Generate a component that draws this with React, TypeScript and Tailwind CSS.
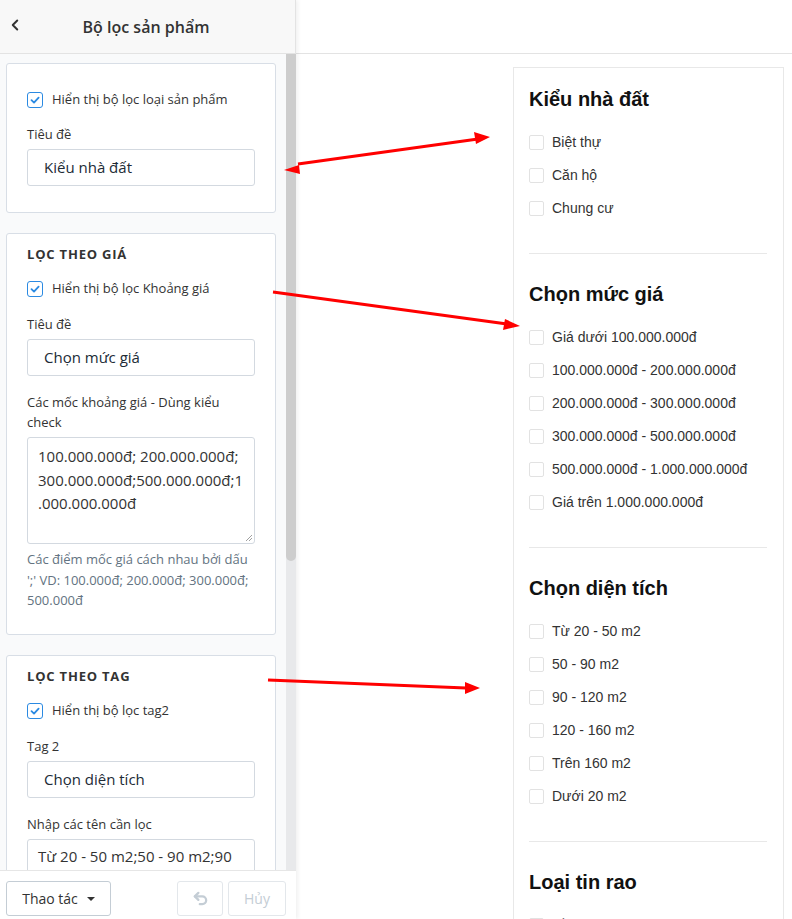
import { ChevronLeft, Undo2 } from 'lucide-react';

const leftFont = { fontFamily: '"Open Sans", "Noto Sans", sans-serif' };
const rightFont = { fontFamily: '"Liberation Sans", Arial, sans-serif' };

const sections = [
  { title: 'Kiểu nhà đất', items: ['Biệt thự', 'Căn hộ', 'Chung cư'] },
  {
    title: 'Chọn mức giá',
    items: [
      'Giá dưới 100.000.000đ',
      '100.000.000đ - 200.000.000đ',
      '200.000.000đ - 300.000.000đ',
      '300.000.000đ - 500.000.000đ',
      '500.000.000đ - 1.000.000.000đ',
      'Giá trên 1.000.000.000đ',
    ],
  },
  {
    title: 'Chọn diện tích',
    items: ['Từ 20 - 50 m2', '50 - 90 m2', '90 - 120 m2', '120 - 160 m2', 'Trên 160 m2', 'Dưới 20 m2'],
  },
  { title: 'Loại tin rao', items: ['Cần bán', 'Cho thuê'] },
];

function BlueCheck({ label }: { label: string }) {
  return (
    <label className="flex items-center h-5 gap-[9px] text-[13px] text-[#333]">
      <span className="w-4 h-4 rounded-[3px] border border-[#2b8ae2] bg-white flex items-center justify-center shrink-0">
        <svg width="10" height="10" viewBox="0 0 10 10" fill="none">
          <path d="M1.5 5.2 4 7.6 8.6 2.6" stroke="#2b8ae2" strokeWidth="1.8" strokeLinecap="round" strokeLinejoin="round" />
        </svg>
      </span>
      {label}
    </label>
  );
}

function Field({ label, value, top = 'mt-[15px]' }: { label: string; value: string; top?: string }) {
  return (
    <div className={top}>
      <p className="h-5 leading-5 text-[13px] text-[#333]">{label}</p>
      <div className="mt-[5px] h-[37px] border border-[#d3d9e0] rounded-[3px] bg-white flex items-center px-4 text-[15px] text-[#212b36]">
        {value}
      </div>
    </div>
  );
}

function Card({ children, className = '' }: { children: React.ReactNode; className?: string }) {
  return (
    <div className={`bg-white border border-[#d8dee6] rounded-[3px] px-5 ${className}`}>{children}</div>
  );
}

function CardTitle({ text }: { text: string }) {
  return <h3 className="h-5 leading-5 text-[13px] font-bold text-[#333] uppercase tracking-[0.8px]">{text}</h3>;
}

export default function App() {
  return (
    <div className="relative w-[792px] h-[919px] overflow-hidden flex bg-white">
      {/* left settings panel */}
      <aside className="w-[296px] h-full flex flex-col bg-[#f9fafb] shadow-[2px_0_4px_rgba(0,0,0,0.06)] z-10" style={leftFont}>
        <div className="h-[54px] shrink-0 bg-[#f8f8f8] border-b border-r border-[#e3e3e3] flex items-center relative">
          <ChevronLeft className="absolute left-[6px] top-[16px] text-[#333]" size={18} strokeWidth={2.6} />
          <h1 className="w-full text-center text-[16px] font-semibold text-[#333] pr-[3px]">Bộ lọc sản phẩm</h1>
        </div>

        <div className="flex-1 flex min-h-0">
          <div className="flex-1 overflow-hidden pt-[9px] pl-[6px] pr-[10px]">
            <Card className="pt-[26px] pb-[26px]">
              <BlueCheck label="Hiển thị bộ lọc loại sản phẩm" />
              <Field label="Tiêu đề" value="Kiểu nhà đất" top="mt-[14px]" />
            </Card>

            <Card className="mt-5 pt-[10px] pb-[23px]">
              <CardTitle text="Lọc theo giá" />
              <div className="mt-[15px]">
                <BlueCheck label="Hiển thị bộ lọc Khoảng giá" />
              </div>
              <Field label="Tiêu đề" value="Chọn mức giá" />
              <div className="mt-[16px]">
                <p className="leading-5 text-[13px] text-[#333]">Các mốc khoảng giá - Dùng kiểu check</p>
                <div className="relative mt-[5px] h-[107px] border border-[#d3d9e0] rounded-[3px] bg-white pl-[10px] pr-1 pt-[7px] text-[15px] leading-[23.5px] text-[#333]">
                  100.000.000đ; 200.000.000đ;
                  <br />
                  300.000.000đ;500.000.000đ;1
                  <br />
                  .000.000.000đ
                  <svg className="absolute right-[1px] bottom-[1px]" width="8" height="8" viewBox="0 0 8 8">
                    <path d="M7 1 1 7M7 4 4 7" stroke="#888" strokeWidth="0.8" />
                  </svg>
                </div>
                <p className="mt-[5px] text-[13px] leading-[20.5px] text-[#637381]">
                  Các điểm mốc giá cách nhau bởi dấu ';' VD: 100.000đ; 200.000đ; 300.000đ; 500.000đ
                </p>
              </div>
            </Card>

            <Card className="mt-5 pt-[10px] pb-6">
              <CardTitle text="Lọc theo tag" />
              <div className="mt-[15px]">
                <BlueCheck label="Hiển thị bộ lọc tag2" />
              </div>
              <Field label="Tag 2" value="Chọn diện tích" />
              <div className="mt-[16px]">
                <p className="h-5 leading-5 text-[13px] text-[#333]">Nhập các tên cần lọc</p>
                <div className="mt-[5px] h-[60px] border border-[#d3d9e0] rounded-[3px] bg-white pl-[10px] pt-[5px] text-[15px] leading-[23.5px] text-[#333]">
                  Từ 20 - 50 m2;50 - 90 m2;90
                </div>
              </div>
            </Card>
          </div>
          <div className="w-[10px] bg-[#e8e9eb] shrink-0">
            <div className="h-[507px] bg-[#cdcdcd] rounded-b-[5px]" />
          </div>
        </div>

        <div className="h-[49px] shrink-0 bg-white border-t border-[#e6e6e6] flex items-start pt-[10px] pl-[6px] pr-[10px] gap-[5px]">
          <button className="h-[35px] w-[105px] border border-[#c4cdd5] rounded-[3px] bg-white flex items-center justify-center gap-[9px] text-[14px] text-[#333]">
            Thao tác
            <span className="w-0 h-0 border-l-[4px] border-r-[4px] border-t-[4px] border-l-transparent border-r-transparent border-t-[#333]" />
          </button>
          <div className="flex-1" />
          <button className="h-[35px] w-[46px] border border-[#e3e7eb] rounded-[3px] bg-white flex items-center justify-center">
            <Undo2 size={17} strokeWidth={3.2} className="text-[#c4cdd5]" />
          </button>
          <button className="h-[35px] w-[58px] border border-[#e3e7eb] rounded-[3px] bg-white text-[14px] text-[#c4cdd5]">
            Hủy
          </button>
        </div>
      </aside>

      {/* preview */}
      <main className="flex-1 flex flex-col" style={rightFont}>
        <div className="h-[54px] shrink-0 bg-white border-b border-[#e3e3e3]" />
        <div className="pl-[217px] pt-[13px]">
          <div className="w-[271px] border border-[#e8e8e8] bg-white pl-[15px] pr-4">
            {sections.map((s, i) => (
              <div key={s.title} className={`${i === 0 ? 'pt-[19px]' : 'pt-[28px] border-t border-[#e8e8e8]'} pb-[28px]`}>
                <h2 className="h-6 leading-6 text-[20px] font-bold text-[#111]">{s.title}</h2>
                <ul className="mt-[15px]">
                  {s.items.map((it) => (
                    <li key={it} className="h-[33px] flex items-center gap-[8px] text-[14px] text-[#333]">
                      <span className="w-[15px] h-[15px] border border-[#e2e2e2] rounded-[2px] bg-white shrink-0" />
                      {it}
                    </li>
                  ))}
                </ul>
              </div>
            ))}
          </div>
        </div>
      </main>

      {/* annotation arrows */}
      <svg className="absolute inset-0 pointer-events-none z-20" width="792" height="919" viewBox="0 0 792 919">
        <g stroke="#ff0000" strokeWidth="3" fill="#ff0000">
          <line x1="298" y1="164" x2="478" y2="139" />
          <polygon points="490,137 474,132 476,144" stroke="none" />
          <polygon points="284,170 299,165 300,174" stroke="none" />
          <line x1="273" y1="292" x2="507" y2="324" />
          <polygon points="520,326 505,319 503,330" stroke="none" />
          <line x1="268" y1="680" x2="466" y2="688" />
          <polygon points="480,688 465,682 465,694" stroke="none" />
        </g>
      </svg>
    </div>
  );
}
